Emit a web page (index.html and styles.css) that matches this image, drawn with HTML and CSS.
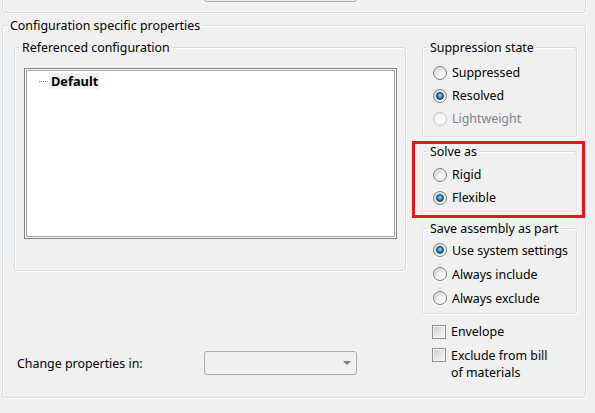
FILE: index.html
```html
<!DOCTYPE html>
<html>
<head>
<meta charset="utf-8">
<link rel="stylesheet" href="styles.css">
</head>
<body>
<div class="top-group">
  <div class="combo"><span class="arrow"></span></div>
</div>

<fieldset class="group config">
  <legend>Configuration specific properties</legend>
  <div class="config-body">
    <div class="left-col">
      <fieldset class="group ref">
        <legend>Referenced configuration</legend>
        <div class="tree">
          <div class="tree-inner">
            <div class="tree-row"><span class="dots"></span><span class="node">Default</span></div>
          </div>
        </div>
      </fieldset>
      <div class="change-row">
        <span class="change-label">Change properties in:</span>
        <div class="combo disabled"><span class="arrow"></span></div>
      </div>
    </div>

    <div class="right-col">
      <fieldset class="group supp">
        <legend>Suppression state</legend>
        <div class="opt"><span class="radio"></span><span>Suppressed</span></div>
        <div class="opt"><span class="radio checked"></span><span>Resolved</span></div>
        <div class="opt off"><span class="radio dis"></span><span>Lightweight</span></div>
      </fieldset>

      <div class="annot">
        <fieldset class="group solve">
          <legend>Solve as</legend>
          <div class="opt"><span class="radio"></span><span>Rigid</span></div>
          <div class="opt"><span class="radio checked"></span><span>Flexible</span></div>
        </fieldset>
      </div>

      <fieldset class="group save">
        <legend>Save assembly as part</legend>
        <div class="opt tall"><span class="radio checked"></span><span>Use system settings</span></div>
        <div class="opt tall"><span class="radio"></span><span>Always include</span></div>
        <div class="opt tall"><span class="radio"></span><span>Always exclude</span></div>
      </fieldset>

      <div class="checks">
        <div class="chk"><span class="box"></span><span>Envelope</span></div>
        <div class="chk two"><span class="box"></span><span>Exclude from bill<br>of materials</span></div>
      </div>
    </div>
  </div>
</fieldset>
</body>
</html>
```

FILE: styles.css
```css
html, body {
  margin: 0;
  padding: 0;
  background: #f0f0f0;
}
body {
  display: flow-root;
  font-family: "Noto Sans", "Open Sans", sans-serif;
  font-size: 12.4px;
  color: #000;
  height: 413px;
  overflow: hidden;
}

.top-group {
  box-sizing: border-box;
  margin: -30px 0 0 2px;
  width: 584px;
  height: 43px;
  border: 1px solid #d5dfe5;
  border-radius: 3px;
  box-shadow: 1px 1px 0 #fff, inset 1px 1px 0 #fff;
  padding: 7px 0 0 201px;
}

.combo {
  box-sizing: border-box;
  width: 153px;
  height: 24px;
  border: 1px solid #acacac;
  border-radius: 3px;
  background: #f0f0f0;
  display: flex;
  align-items: center;
  justify-content: flex-end;
  padding-right: 5px;
}
.arrow {
  width: 0;
  height: 0;
  border-left: 4px solid transparent;
  border-right: 4px solid transparent;
  border-top: 4px solid #7a7a7a;
}

.group {
  margin: 0;
  padding: 0;
  min-width: 0;
  border: 1px solid #d5dfe5;
  border-radius: 3px;
  box-shadow: 1px 1px 0 #fff, inset 1px 1px 0 #fff;
  box-sizing: border-box;
}
.group > legend {
  line-height: 17px;
  padding: 0 2px;
  margin-left: 5px;
}

.config {
  margin: 4px 0 0 2px;
  width: 584px;
  height: 381px;
}
.config-body {
  display: grid;
  grid-template-columns: 392px 155px;
  column-gap: 16px;
  padding: 5px 0 0 11px;
  align-items: start;
}

.left-col {
  display: flex;
  flex-direction: column;
}
.ref {
  height: 232px;
  padding: 12px 8px 0 9px;
}
.ref > legend {
  margin-left: -4px;
}
.tree {
  box-sizing: border-box;
  height: 171px;
  border: 1px solid #7f8389;
  padding: 1px;
  background: #fff;
}
.tree-inner {
  box-sizing: border-box;
  height: 100%;
  border: 1px solid #a0a0a0;
  background: #fff;
  padding: 2px 0 0 12px;
}
.tree-row {
  display: flex;
  align-items: center;
  height: 16px;
}
.dots {
  width: 9px;
  border-top: 1px dotted #808080;
  margin-right: 1px;
}
.node {
  font-weight: bold;
  font-size: 12.8px;
  background: #f0f0f0;
  padding: 0 2px;
  line-height: 16px;
}

.change-row {
  display: flex;
  align-items: center;
  margin-top: 80px;
  padding-left: 3px;
}
.change-label {
  flex: 0 0 187px;
}

.right-col {
  display: flex;
  flex-direction: column;
}
.supp {
  height: 98px;
  padding: 5px 0 0 10px;
}
.supp > legend,
.solve > legend,
.save > legend {
  margin-left: -5px;
}
.opt {
  display: flex;
  align-items: center;
  gap: 5px;
  height: 23px;
}
.opt.tall {
  height: 24px;
}
.opt.off {
  color: #7f7f8f;
}

.annot {
  margin: 4px -8px 0 -10px;
  border: 3px solid #e8141c;
  padding: 0 5px 3px 7px;
}
.solve {
  margin-top: -1px;
  height: 69px;
  padding: 3px 0 0 10px;
}
.save {
  margin-top: 2px;
  height: 94px;
  padding: 1px 0 0 10px;
}

.radio {
  box-sizing: border-box;
  width: 14px;
  height: 14px;
  flex: 0 0 14px;
  border-radius: 50%;
  border: 1px solid #7b7e83;
  background: radial-gradient(circle at 68% 68%, #ffffff 0%, #ececec 40%, #bcbcbc 100%);
  box-shadow: inset 0 0 0 1px rgba(255,255,255,0.6);
  display: grid;
  place-items: center;
}
.radio.checked {
  background: radial-gradient(circle at 68% 68%, #ffffff 0%, #e4e4e4 50%, #b4b4b4 100%);
}
.radio.checked::after {
  content: "";
  box-sizing: border-box;
  width: 8px;
  height: 8px;
  border-radius: 50%;
  border: 1px solid #123e63;
  background: radial-gradient(circle at 50% 40%, #b5e6fd 0%, #3c9fd8 35%, #14649c 70%, #0b3558 100%);
}
.radio.dis {
  border-color: #c4c4c4;
  box-shadow: none;
  background: radial-gradient(circle at 68% 68%, #ffffff 0%, #f6f6f6 50%, #e2e2e2 100%);
}

.checks {
  padding: 10px 0 0 10px;
  display: flex;
  flex-direction: column;
  gap: 7px;
}
.chk {
  display: flex;
  align-items: flex-start;
  gap: 5px;
  line-height: 16px;
}
.chk .box {
  margin-top: 1px;
}
.chk.two {
  line-height: 17px;
}
.box {
  box-sizing: border-box;
  width: 14px;
  height: 14px;
  flex: 0 0 14px;
  border: 1px solid #8f8f8f;
  box-shadow: inset 0 0 0 1px #f4f4f4;
  background: linear-gradient(135deg, #c8c8c8 0%, #e8e8e8 55%, #fbfbfb 100%);
}
```
